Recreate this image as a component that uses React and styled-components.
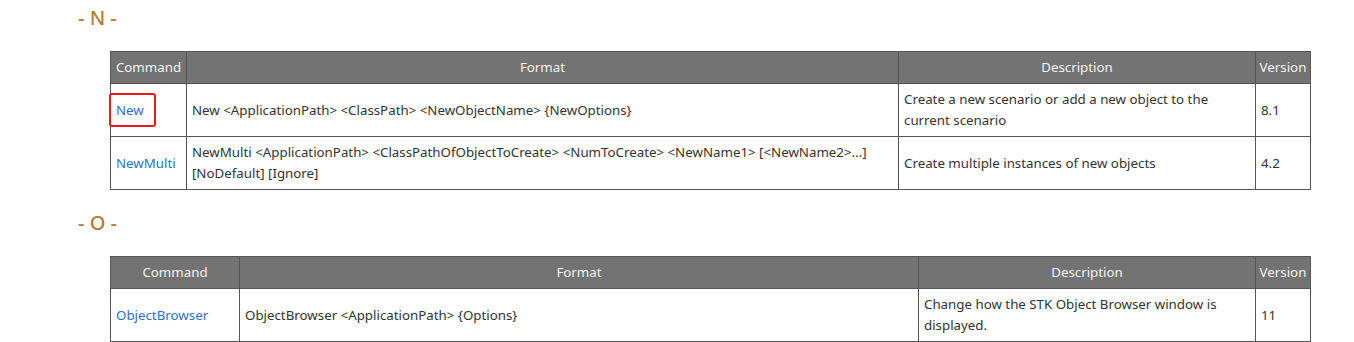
import React from "react";
import styled, { createGlobalStyle } from "styled-components";

const GlobalStyle = createGlobalStyle`
  body {
    margin: 0;
    background: #fff;
    font-family: "Noto Sans", "Open Sans", sans-serif;
  }
`;

const Page = styled.div`
  padding: 6px 0 0 78px;
`;

const Section = styled.section`
  margin-bottom: 21px;
`;

const Letter = styled.h2`
  margin: 0 0 21px;
  font-size: 20px;
  font-weight: 500;
  line-height: 24px;
  color: #b27c38;
`;

const Table = styled.table`
  margin-left: 32px;
  width: 1200px;
  border-collapse: collapse;
  table-layout: fixed;
  font-size: 13.3px;
  line-height: 21px;
  color: #333;
`;

const Head = styled.th`
  background: #737373;
  color: #f2f2f2;
  font-weight: 400;
  text-align: center;
  padding: 5px 3px;
  border: 1px solid #555;
  white-space: nowrap;
`;

const Cell = styled.td`
  padding: 5px 5px;
  border: 1px solid #555;
  vertical-align: middle;
`;

const CmdLink = styled.a`
  color: #2f6fd6;
  text-decoration: none;
  display: inline-block;
  position: relative;
  &::after {
    content: "";
    display: ${(p) => (p.$marked ? "block" : "none")};
    position: absolute;
    left: -7px;
    right: -12px;
    top: -7px;
    bottom: -6px;
    border: 2px solid #f01818;
    border-radius: 3px;
  }
`;

const sections = [
  {
    letter: "N",
    cols: [76, 712, 357, 55],
    rows: [
      {
        cmd: "New",
        marked: true,
        format: "New <ApplicationPath> <ClassPath> <NewObjectName> {NewOptions}",
        desc: "Create a new scenario or add a new object to the current scenario",
        ver: "8.1",
      },
      {
        cmd: "NewMulti",
        format:
          "NewMulti <ApplicationPath> <ClassPathOfObjectToCreate> <NumToCreate> <NewName1> [<NewName2>...] [NoDefault] [Ignore]",
        desc: "Create multiple instances of new objects",
        ver: "4.2",
      },
    ],
  },
  {
    letter: "O",
    cols: [129, 679, 337, 55],
    rows: [
      {
        cmd: "ObjectBrowser",
        format: "ObjectBrowser <ApplicationPath> {Options}",
        desc: "Change how the STK Object Browser window is displayed.",
        ver: "11",
      },
    ],
  },
];

function CommandTable({ cols, rows }) {
  return (
    <Table>
      <colgroup>
        {cols.map((w, i) => (
          <col key={i} style={{ width: w }} />
        ))}
      </colgroup>
      <thead>
        <tr>
          <Head>Command</Head>
          <Head>Format</Head>
          <Head>Description</Head>
          <Head>Version</Head>
        </tr>
      </thead>
      <tbody>
        {rows.map((r) => (
          <tr key={r.cmd}>
            <Cell>
              <CmdLink href="#" $marked={r.marked}>
                {r.cmd}
              </CmdLink>
            </Cell>
            <Cell>{r.format}</Cell>
            <Cell>{r.desc}</Cell>
            <Cell>{r.ver}</Cell>
          </tr>
        ))}
      </tbody>
    </Table>
  );
}

export default function App() {
  return (
    <>
      <GlobalStyle />
      <Page>
        {sections.map((s) => (
          <Section key={s.letter}>
            <Letter>- {s.letter} -</Letter>
            <CommandTable cols={s.cols} rows={s.rows} />
          </Section>
        ))}
      </Page>
    </>
  );
}
